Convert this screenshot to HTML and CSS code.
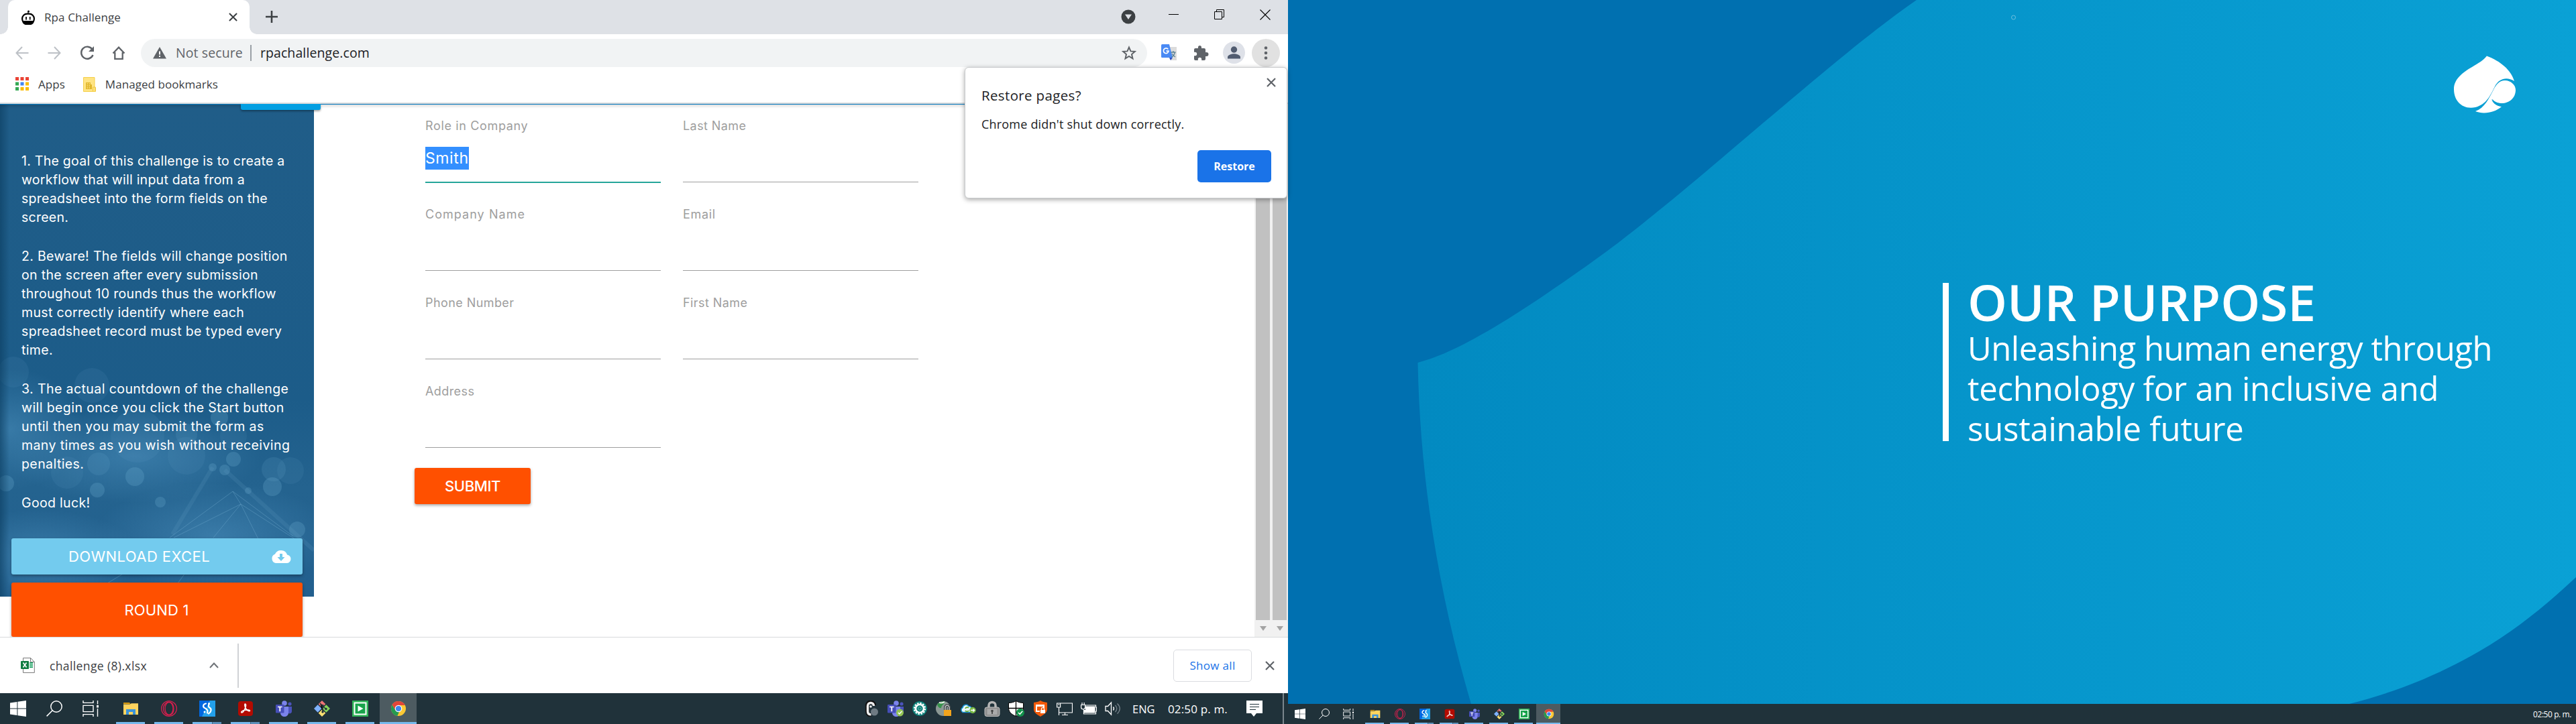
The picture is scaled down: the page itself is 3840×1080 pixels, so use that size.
FILE: index.html
```html
<!DOCTYPE html>
<html lang="en">
<head>
<meta charset="utf-8">
<title>Rpa Challenge</title>
<link rel="stylesheet" href="styles.css">
</head>
<body>
<svg class="sprite" aria-hidden="true">
  <symbol id="i-win" viewBox="0 0 24 24"><path fill="#fff" d="M0 3.4 10.4 2v9.5H0zM11.4 1.8 24 0v11.5H11.4zM0 12.5h10.4V22L0 20.6zM11.4 12.5H24V24l-12.6-1.8z"/></symbol>
  <symbol id="i-search" viewBox="0 0 24 24"><g fill="none" stroke="#fff" stroke-width="1.5"><circle cx="15" cy="9" r="8.2"/><path d="M9.2 14.8.6 23.4"/></g></symbol>
  <symbol id="i-tasks" viewBox="0 0 24 24"><g fill="none" stroke="#fff" stroke-width="1.4"><path d="M1 0v3.4h15V0M1 24v-3.4h15V24M1 7.4h15v9.2H1zM22.5 0v5.5M22.5 12v12"/></g><path fill="#fff" d="M21 7h3v3.500h-3z"/></symbol>
  <symbol id="i-folder" viewBox="0 0 24 24"><path fill="#d99a0b" d="M1 3h9l1.500 2H1z"/><path fill="#ffd45e" d="M1 5.500h9.500L13 4.200h10V21H1z"/><path fill="#3c94da" d="M5 21v-8h14v8h-4v-4H9v4z"/></symbol>
  <symbol id="i-opera" viewBox="0 0 24 24"><g fill="none" stroke="#d81f4e" stroke-width="1.3"><circle cx="12" cy="12" r="11.300"/><ellipse cx="12" cy="12" rx="6" ry="9.500"/><path d="M13 2.400c4.500 1 6 5 6 9.600s-1.500 8.600-6 9.600M13 2.400C9 1.500 3.500 5.500 3.500 12S9 22.500 13 21.600"/></g></symbol>
  <symbol id="i-azure" viewBox="0 0 24 24"><path fill="#0067df" d="M0 0h24v24H0z"/><path fill="#23a0ea" d="M16 0h8v24H4z"/><g fill="none" stroke="#fff" stroke-width="2.200" stroke-linecap="round"><path d="M10 4.500C5.500 5 5 9.500 8 11c3.500 1.500 5.500 3.500 4 7.500M14.500 5.500c-1.500 2.500-.5 4.500 1.500 5.500 2.500 1.500 2 6.500-2 8.500"/></g><circle cx="14.500" cy="4.500" r="1.500" fill="#fff"/><circle cx="8" cy="17" r="1.500" fill="#fff"/></symbol>
  <symbol id="i-acrobat" viewBox="0 0 24 24"><rect x="1" y="1" width="22" height="22" rx="4" fill="#b30b00"/><path fill="none" stroke="#fff" stroke-width="1.500" d="M11.500 5c1.500 0 1.300 3 .3 5.500C10.500 14 8 18.500 6.200 18c-1.600-.8 1-3 5-3.700 3.500-.7 7.500-.5 7.300 1-.3 1.500-4-.3-6-3.300C11 9.800 10 5 11.500 5z"/></symbol>
  <symbol id="i-teams" viewBox="0 0 24 24"><circle cx="21" cy="5" r="2.600" fill="#4b53bc"/><circle cx="13" cy="4" r="3.800" fill="#7b83eb"/><path fill="#4b53bc" d="M16 9h8v7c0 3-3 4-5 3z"/><path fill="#7b83eb" d="M7 9h12v9c0 8-12 8-12 0z"/><rect y="6" width="12.500" height="12.500" rx="1.200" fill="#464eb8"/><path fill="#fff" d="M3 8.700h6.600v1.600H7.200v6H5.400v-6H3z"/></symbol>
  <symbol id="i-git" viewBox="0 0 24 24"><path fill="#f07575" d="m12 0 5.300 5.300-5.300 5.300-5.300-5.300z"/><path fill="#80b3ff" d="m5.700 6.300 5.600 5.700-5.600 5.700L0 12z"/><path fill="#87d45a" d="m18.300 6.300L24 12l-5.700 5.700-5.600-5.700z"/><path fill="#ffe173" d="m12 13.400 5.300 5.300L12 24l-5.300-5.300z"/><g stroke="#25343a" stroke-width="1.500"><path d="m9 4 4 4v9M13 8.500l5 4"/></g><g fill="#25343a"><circle cx="13" cy="7.500" r="1.700"/><circle cx="18" cy="12.500" r="1.700"/><circle cx="13" cy="17" r="1.700"/></g></symbol>
  <symbol id="i-play" viewBox="0 0 24 24"><path fill="#2fb457" d="M0 0h24v24H0z"/><path fill="#17a34a" stroke="#fff" stroke-width="2" d="M3.500 3.500h17v17h-17z"/><path fill="#fff" d="m8.500 7.500 8 4.500-8 4.500z"/></symbol>
  <symbol id="i-chrome" viewBox="0 0 24 24"><circle cx="12" cy="12" r="11" fill="#fbc834"/><path fill="#e1453a" d="M2.500 6.500A11 11 0 0 1 21.800 7H12L7.500 14.500z"/><path fill="#259a50" d="M2.500 6.500 7.700 14.700 13 17l-2.700 6A11 11 0 0 1 2.500 6.500z"/><circle cx="12" cy="12" r="5.300" fill="#fff"/><circle cx="12" cy="12" r="4.100" fill="#3f85ee"/></symbol>
  <symbol id="i-x" viewBox="0 0 14 14"><path d="m1 1 12 12M13 1 1 13" stroke="currentColor" stroke-width="2.200" fill="none"/></symbol>
</svg>

<div class="desktop">
  <div class="monitor">
    <header class="tabstrip">
      <div class="tab">
        <svg width="20" height="22" viewBox="0 0 20 22"><circle cx="10.500" cy="2" r="1.500"/><path d="M10 2.500V6" stroke="#000" stroke-width="1.200"/><rect x="1.100" y="5.600" width="17.800" height="14.800" rx="7.200" fill="#fff" stroke="#000" stroke-width="2.200"/><path d="M1 16h18c-.5 3.500-2.500 6-6 6H7c-3.500 0-5.500-2.500-6-6z"/><path d="M7 10v4.500M12.700 10v4.500" stroke="#000" stroke-width="1.800"/></svg>
        <span class="tab-title">Rpa Challenge</span>
        <svg class="tab-close" width="13" height="13"><use href="#i-x"/></svg>
      </div>
      <svg class="new-tab" width="18" height="18" viewBox="0 0 18 18"><path d="M9 0v18M0 9h18" stroke="#3c4043" stroke-width="2.600"/></svg>
      <div class="window-controls">
        <svg width="22" height="22" viewBox="0 0 22 22"><circle cx="11" cy="11" r="10.500" fill="#3c4043"/><path d="M6 7.500h10L11 15z" fill="#dee1e6"/></svg>
        <svg class="win-btn" width="16" height="16" viewBox="0 0 16 16"><path d="M0 7.500h15" stroke="#000"/></svg>
        <svg class="win-btn" width="16" height="16" viewBox="0 0 16 16"><path d="M.5 3.500h11v11H.5zM3.500 3V.5h11v11H12" fill="none" stroke="#000"/></svg>
        <svg class="win-btn" width="16" height="16" viewBox="0 0 16 16"><path d="m.5.5 15 15M15.500.5l-15 15" stroke="#000" stroke-width="1.100"/></svg>
      </div>
    </header>

    <div class="toolbar">
      <svg class="nav-ico" width="20" height="20" viewBox="0 0 20 20"><path d="M19.500 10H2M10 1 1.500 10l8.500 9" fill="none" stroke="#bdc1c6" stroke-width="2"/></svg>
      <svg class="nav-ico" width="20" height="20" viewBox="0 0 20 20"><path d="M.5 10H18M10 1l8.500 9-8.500 9" fill="none" stroke="#bdc1c6" stroke-width="2"/></svg>
      <svg class="nav-ico" width="22" height="22" viewBox="0 0 22 22"><path d="M18.500 5.500a9 9 0 1 0 1 8.500" fill="none" stroke="#5f6368" stroke-width="2.400"/><path d="M21 1v8h-8z" fill="#5f6368"/></svg>
      <svg class="nav-ico" width="20" height="20" viewBox="0 0 20 20"><path d="M1.500 10.500 10 1.600l8.500 8.900M4.300 9v9.800h11.400V9" fill="none" stroke="#5f6368" stroke-width="2.300"/></svg>
      <div class="omnibox">
        <svg width="20" height="18" viewBox="0 0 20 18"><path d="M10 0l10 17.500H0z" fill="#5f6368"/><path d="M10 6.500v5M10 13v2" stroke="#fff" stroke-width="2"/></svg>
        <span class="not-secure">Not secure</span>
        <span class="url">rpachallenge.com</span>
        <svg class="star" width="22" height="22" viewBox="0 0 22 22"><path d="m11 2.600 2.500 5.800 6.300.5-4.800 4.200 1.500 6.200L11 16l-5.500 3.300L7 13.100 2.200 8.900l6.300-.5z" fill="none" stroke="#5f6368" stroke-width="2"/></svg>
      </div>
      <div class="extensions">
        <svg width="24" height="25" viewBox="0 0 24 25"><path d="M10 4h13v20H14z" fill="#dcdcdc"/><path d="M1.500 0H12l5 20H1.500Q0 20 0 18.500v-17Q0 0 1.500 0z" fill="#4a8af4"/><path d="M12 20h5l-3 4z" fill="#2f4fc0"/><path d="M10.300 7.500A3.800 3.800 0 1 0 11 10.200H7.500" fill="none" stroke="#fff" stroke-width="1.700"/><path d="M14.500 12h7M18 10v2M20.500 12c-1 4-3 6-5 7M16 14c1 2 3 4 5 5" fill="none" stroke="#5b8295" stroke-width="1.300"/></svg>
        <svg width="22" height="22" viewBox="0 0 22 22"><path fill="#5f6368" d="M18.500 10H17V6a2 2 0 0 0-2-2h-4V2.600a2.500 2.500 0 0 0-5 0V4H2a2 2 0 0 0-2 2v3.800h1.500a2.700 2.700 0 0 1 0 5.400H0V20a2 2 0 0 0 2 2h3.800v-1.500a2.700 2.700 0 0 1 5.400 0V22H15a2 2 0 0 0 2-2v-4h1.500a3 3 0 0 0 0-6z" /></svg>
        <svg width="33" height="33" viewBox="0 0 33 33"><circle cx="16.500" cy="16.500" r="16.500" fill="#dee1e8"/><circle cx="16.500" cy="12" r="4.700" fill="#515c70"/><path d="M7 25.500v-2.300c0-3.500 6-5 9.500-5s9.500 1.500 9.500 5v2.300z" fill="#515c70"/></svg>
        <svg width="42" height="42" viewBox="0 0 42 42"><circle cx="21" cy="21" r="21" fill="#e1e1e1"/><g fill="#5f6368"><circle cx="21" cy="13.500" r="2.300"/><circle cx="21" cy="21" r="2.300"/><circle cx="21" cy="28.500" r="2.300"/></g></svg>
      </div>
    </div>

    <div class="bookmarks">
      <svg width="20" height="20" viewBox="0 0 20 20"><path fill="#ea4335" d="M0 0h5v5H0zM7.500 0h5v5h-5zM15 0h5v5h-5z"/><path fill="#34a853" d="M0 7.500h5v5H0zM0 15h5v5H0z"/><path fill="#4285f4" d="M7.500 7.500h5v5h-5z"/><path fill="#fbbc04" d="M15 7.500h5v5h-5zM7.500 15h5v5h-5zM15 15h5v5h-5z"/></svg>
      <span>Apps</span>
      <svg class="folder-ico" width="19" height="22" viewBox="0 0 19 22"><path d="M.5.500h16.500v14l1.500 1v6H.5z" fill="#ffe484" stroke="#f5cf48"/><path d="M4 8h7v3h2v7H4z" fill="#e0b62c"/><path d="M5.500 10h1.500M8.500 10H10M5.500 13h1.500M8.500 13H10M5.500 16h1.500M8.500 16H10" stroke="#ffe484" stroke-width="1.500"/><path d="M14.500 21v-6h3.500v6" fill="none" stroke="#f0c63c"/></svg>
      <span>Managed bookmarks</span>
    </div>

    <main class="viewport">
      <div class="page-nav"><i class="page-nav-tab"></i></div>
      <aside class="sidebar">
        <svg class="bokeh" width="468" height="735" viewBox="0 155 468 735">
          <defs>
            <linearGradient id="side" x1="0" y1="0" x2="0" y2="1"><stop offset="0" stop-color="#205d88"/><stop offset=".6" stop-color="#1c5c89"/><stop offset=".78" stop-color="#24638f"/><stop offset="1" stop-color="#225f8e"/></linearGradient>
            <radialGradient id="glow"><stop offset="0" stop-color="#4c90bd" stop-opacity=".55"/><stop offset="1" stop-color="#4c90bd" stop-opacity="0"/></radialGradient>
            <linearGradient id="edge"><stop offset="0" stop-color="#0b3d60" stop-opacity=".6"/><stop offset="1" stop-color="#0b3d60" stop-opacity="0"/></linearGradient>
          </defs>
          <path fill="url(#side)" d="M0 155h468v735H0z"/>
          <g fill="url(#glow)"><ellipse cx="15" cy="640" rx="110" ry="90"/><ellipse cx="200" cy="680" rx="190" ry="70"/><ellipse cx="320" cy="800" rx="180" ry="80"/><ellipse cx="60" cy="830" rx="150" ry="70"/></g>
          <g fill="#68a8cc" fill-opacity=".1"><circle cx="20" cy="555" r="23"/><circle cx="137" cy="575" r="26"/><circle cx="205" cy="650" r="40"/><circle cx="100" cy="705" r="24"/><circle cx="433" cy="702" r="20"/><circle cx="348" cy="650" r="20"/><circle cx="278" cy="680" r="28"/></g>
          <g fill="#68a8cc" fill-opacity=".28"><circle cx="9" cy="721" r="12"/><circle cx="145" cy="731" r="11"/><circle cx="201" cy="711" r="14"/><circle cx="239" cy="749" r="8"/><circle cx="317" cy="697" r="6"/><circle cx="335" cy="701" r="8"/><circle cx="348" cy="685" r="11"/><circle cx="406" cy="726" r="14"/><circle cx="443" cy="790" r="12"/><circle cx="370" cy="732" r="5"/><circle cx="327" cy="623" r="13"/></g>
          <g fill="#68a8cc" fill-opacity=".16"><circle cx="147" cy="692" r="17"/><circle cx="408" cy="700" r="18"/><circle cx="278" cy="648" r="16"/></g>
          <g fill="none" stroke="#74add0" stroke-opacity=".4"><path d="m253 802 94-69 90 67M259 802l100-50 90 58M318 802l41-50 30 60M347 733l12 19M265 870l11-15M160 870l25-15"/><path d="m335 701 133 120M317 697l-60 100" stroke-width="6" stroke-opacity=".14"/></g>
          <path fill="url(#edge)" d="M0 155h14v735H0z"/>
        </svg>
        <div class="instructions">
          <p class="goal">1. The goal of this challenge is to create a<br>workflow that will input data from a<br>spreadsheet into the form fields on the<br>screen.</p>
          <p>2. Beware! The fields will change position<br>on the screen after every submission<br>throughout 10 rounds thus the workflow<br>must correctly identify where each<br>spreadsheet record must be typed every<br>time.</p>
          <p class="countdown">3. The actual countdown of the challenge<br>will begin once you click the Start button<br>until then you may submit the form as<br>many times as you wish without receiving<br>penalties.</p>
          <p>Good luck!</p>
        </div>
        <div class="btn btn-download"><span>DOWNLOAD EXCEL</span>
          <svg width="30" height="20" viewBox="0 0 30 20"><path fill="#fff" d="M24 7.500A9.500 9 0 0 0 6 6.600 7 7 0 0 0 7 20h17a6.300 6.300 0 0 0 0-12.500z"/><path fill="#73cbee" d="M13 6h4v5h3.500L15 17l-5.500-6H13z"/></svg>
        </div>
        <div class="btn btn-round">ROUND 1</div>
      </aside>

      <form class="form">
        <div class="fields">
          <div class="field active"><label class="wide">Role in Company</label><div class="input"><span class="selected">Smith</span></div></div>
          <div class="field"><label>Last Name</label><div class="input"></div></div>
          <div class="field"><label class="wider">Company Name</label><div class="input"></div></div>
          <div class="field"><label class="wide">Email</label><div class="input"></div></div>
          <div class="field"><label>Phone Number</label><div class="input"></div></div>
          <div class="field"><label>First Name</label><div class="input"></div></div>
          <div class="field"><label>Address</label><div class="input"></div></div>
        </div>
        <div class="btn btn-submit">SUBMIT</div>
      </form>

      <div class="scrollbars">
        <div class="scrollbar"><i></i></div>
        <div class="scrollbar"><i></i></div>
      </div>
    </main>

    <div class="downloads">
      <div class="download-item">
        <svg width="21" height="23" viewBox="0 0 21 23"><path d="M3.500.600h11.300l5.500 6v15.800H3.500z" fill="#fff" stroke="#777"/><path d="M14.500.600v6h6" fill="none" stroke="#777"/><path d="M13 8h5M13 11h5M13 14h5" stroke="#21a366" stroke-width="2"/><rect y="5" width="12" height="12" rx="1" fill="#107c41"/><path d="m3.500 7.500 5 7M8.500 7.500l-5 7" stroke="#fff" stroke-width="1.700"/></svg>
        <span>challenge (8).xlsx</span>
        <svg class="chev" width="14" height="9" viewBox="0 0 14 9"><path d="m1 8 6-6.500L13 8" fill="none" stroke="#6e7277" stroke-width="2"/></svg>
      </div>
      <div class="show-all">Show all</div>
      <svg class="downloads-close" width="14" height="14"><use href="#i-x"/></svg>
    </div>

    <footer class="taskbar">
      <div class="sys"><svg><use href="#i-win"/></svg></div><div class="sys"><svg><use href="#i-search"/></svg></div><div class="sys"><svg><use href="#i-tasks"/></svg></div>
      <div class="apps">
        <div class="app"><svg><use href="#i-folder"/></svg></div>
        <div class="app"><svg><use href="#i-opera"/></svg></div>
        <div class="app multi"><svg><use href="#i-azure"/></svg></div>
        <div class="app multi"><svg><use href="#i-acrobat"/></svg></div>
        <div class="app"><svg><use href="#i-teams"/></svg></div>
        <div class="app"><svg><use href="#i-git"/></svg></div>
        <div class="app"><svg><use href="#i-play"/></svg></div>
        <div class="app current"><svg><use href="#i-chrome"/></svg></div>
      </div>
      <div class="tray">
        <svg viewBox="0 0 24 24"><path d="M16 7c0-6-10-6-10 0v9c0 4 3 6 6 6" fill="none" stroke="#111" stroke-width="6"/><path d="M15.500 8c0-6-9-6-9 0v8c0 4 2 5 5 5" fill="none" stroke="#eee" stroke-width="3.500"/><circle cx="11" cy="9" r="1.700" fill="#eee"/><circle cx="16.500" cy="17" r="5.500" fill="#6f7b83"/></svg>
        <svg viewBox="0 0 24 24"><use href="#i-teams" width="24" height="24"/><circle cx="18.500" cy="18" r="5.500" fill="#92c353"/><path d="m15.800 18 2 2 3.500-4" fill="none" stroke="#fff" stroke-width="1.500"/></svg>
        <svg viewBox="0 0 24 24"><circle cx="12" cy="12" r="11" fill="#0b7f78"/><circle cx="12" cy="12" r="8.200" fill="none" stroke="#fff" stroke-width="2" stroke-dasharray="2.600 1.690"/><circle cx="12" cy="12" r="6" fill="none" stroke="#fff" stroke-width="2.600"/><circle cx="12" cy="12" r="2.300" fill="none" stroke="#8ccac5" stroke-width=".8"/></svg>
        <svg viewBox="0 0 24 24"><circle cx="11" cy="12" r="11" fill="#8b9894"/><path d="M2 6c4-5 9-6 12-4-2 4-5 4-6 9-3 1-5-2-6-5z" fill="#35924a"/><path d="M5 3c3 1 6 0 8-1" stroke="#e8eee8" stroke-width="2"/><path d="M14 15v-4c0-5 6-5 6 0v4" fill="none" stroke="#252b30" stroke-width="3.500"/><path d="M14 15v-4c0-5 6-5 6 0v4" fill="none" stroke="#ccc" stroke-width="1.500"/><path d="M12 14h11v9H12z" fill="#f3a51d"/></svg>
        <svg viewBox="0 0 24 24"><path d="M4 17.500a4 4 0 0 1 0-7 5 5 0 0 1 9-2c3 0 4 2 4 4v5z" fill="#e8f8ff" stroke="#1692d0" stroke-width="1.500"/><path d="M8 12a3 3 0 0 1 5-1M13 15a3 3 0 0 1-5 0" fill="none" stroke="#69ae31" stroke-width="1.800"/><circle cx="19" cy="14.500" r="4.700" fill="#78b943"/><path d="M16 14.500h5.500m-2-2 2 2-2 2" fill="none" stroke="#fff" stroke-width="1.500"/></svg>
        <svg viewBox="0 0 24 24"><path d="M7 11V7c0-6 10-6 10 0v4" fill="none" stroke="#b5b5b5" stroke-width="3.500"/><rect x="1" y="10" width="22" height="13.500" rx="3" fill="#8e8e8e" stroke="#c0c0c0"/><rect x="4.500" y="12.500" width="15" height="8.500" fill="#aaa"/><circle cx="12" cy="15.500" r="1.800" fill="#444"/><path d="M12 16v4" stroke="#444" stroke-width="1.800"/></svg>
        <svg viewBox="0 0 24 24"><path d="M11.500.500c3 2 7 3 11 3V11c0 6-5 10-11 12.500C5 21 .5 17 .5 11V3.500c4 0 8-1 11-3z" fill="#fff" stroke="#000"/><path d="M11.500.500v23M.500 11.500h22" stroke="#000" stroke-width="1.300"/><circle cx="18" cy="18" r="6" fill="#11924a"/><path d="m15 18 2.300 2.300 4-4.600" fill="none" stroke="#fff" stroke-width="1.500"/></svg>
        <svg viewBox="0 0 24 24"><path d="M12 0c3 2 6 2.500 10 3v10c0 5-5 8-10 11C7 21 2 18 2 13V3c4-.5 7-1 10-3z" fill="#f25a09"/><path d="M11 16H6V7h11v4" fill="none" stroke="#fff" stroke-width="2"/><path d="M5 6h13v3H5zM12 14h7v5h-7z" fill="#fff"/><path d="M13.500 14v-1.500c0-2.500 4-2.500 4 0V14" fill="none" stroke="#fff" stroke-width="1.200"/></svg>
        <svg viewBox="0 0 24 24"><g fill="none" stroke="#fff" stroke-width="1.200"><path d="M6 4h17.500v14H4M8 21.500h9M12.500 18v3.500M.600 4h5v6h-5zM2 6h2.500M3.500 10v12"/></g></svg>
        <svg viewBox="0 0 24 24"><path d="M7 8.500h14.500v10H5V14h2z" fill="#fff"/><g fill="none" stroke="#fff" stroke-width="1.200"><path d="M6 7h16.500v3h1v6h-1v4H4.500V13M.600 6.500h6V10c0 4-6 4-6 0zM2 6.500V3M5.200 6.500V3"/></g></svg>
        <svg viewBox="0 0 24 24"><g fill="none" stroke="#fff" stroke-width="1.300"><path d="M1 8.500h3.500L9.500 3v18l-5-5.500H1zM12.500 9.500c1.300 1.700 1.300 3.500 0 5.200"/><path d="M15.500 7c3 3.300 3 6.800 0 10.200M18.500 4.500c5 5 5 10.200 0 15.200" stroke="#75818a"/></g></svg>
      </div>
      <span class="lang">ENG</span>
      <span class="clock">02:50 p. m.</span>
      <svg class="notif" width="24" height="24" viewBox="0 0 24 24"><path fill="#fff" d="M0 0h24v19h-9l-4 5-4-5H0z"/><path d="M5 5.500h14M5 9.500h14M5 13.500h9" stroke="#20323a" stroke-width="1.200"/></svg>
      <i class="peek"></i>
    </footer>

    <div class="popup">
      <svg class="popup-close" width="14" height="14"><use href="#i-x"/></svg>
      <h2>Restore pages?</h2>
      <p>Chrome didn't shut down correctly.</p>
      <div class="restore">Restore</div>
    </div>
  </div>

  <div class="monitor second">
    <div class="wallpaper">
      <svg class="wall" width="1920" height="1050" viewBox="0 0 1920 1050">
        <defs><linearGradient id="sea" gradientUnits="userSpaceOnUse" x1="190" y1="0" x2="1920" y2="0"><stop offset="0" stop-color="#028ac1"/><stop offset="1" stop-color="#0aa1d5"/></linearGradient></defs>
        <path fill="url(#sea)" d="M937 0C862 52 782 122 722 172S620 259.500 575 296 498 359 453 391 349 464 306 489 230 531 193.500 541C197 720 226 890 273 1050H1582C1660 1030 1717 1005 1775 972 1830 940 1875 903 1920 861V0z"/>
        <ellipse cx="1081.500" cy="26" rx="3" ry="3" fill="none" stroke="#6fc0df"/>
      </svg>
      <svg class="spade" width="94" height="88" viewBox="0 0 94 88"><path fill="#fff" d="M50 .500C70 8 86 21 91 38 80 31 68 34 62 46 55 60 49 73 33 77 14 81 1 68 1 50 1 35 14 25 28 17 38 11 45 7 50 .500zM93 51c0 12-9 20-21 20-6 0-11-2-15-6l2 4c3 4 8 6 13 7-10 9-27 12-39 7 14-5 20-19 27-32 4-8 9-14 17-14 9 0 16 7 16 14z"/><path d="M58 64.500c4 5 9 7.300 18 6.700l-1 5c-8 0-15-3-17-11.700z" fill="#0a9fd3"/></svg>
      <section class="purpose">
        <h1>OUR PURPOSE</h1>
        <p><span class="l1">Unleashing human energy through</span><br><span class="l2">technology for an inclusive and</span><br><span class="l2">sustainable future</span></p>
      </section>
    </div>
    <footer class="taskbar small">
      <div class="sys"><svg><use href="#i-win"/></svg></div><div class="sys"><svg><use href="#i-search"/></svg></div><div class="sys"><svg><use href="#i-tasks"/></svg></div>
      <div class="apps">
        <div class="app"><svg><use href="#i-folder"/></svg></div>
        <div class="app"><svg><use href="#i-opera"/></svg></div>
        <div class="app multi"><svg><use href="#i-azure"/></svg></div>
        <div class="app multi"><svg><use href="#i-acrobat"/></svg></div>
        <div class="app"><svg><use href="#i-teams"/></svg></div>
        <div class="app"><svg><use href="#i-git"/></svg></div>
        <div class="app"><svg><use href="#i-play"/></svg></div>
        <div class="app current"><svg><use href="#i-chrome"/></svg></div>
      </div>
      <span class="clock">02:50 p. m.</span>
    </footer>
  </div>
</div>
</body>
</html>
```
FILE: styles.css
```css
* { box-sizing: border-box; margin: 0; padding: 0; }
body { width: 3840px; height: 1080px; overflow: hidden; background: #fff; font-family: "Open Sans", sans-serif; color: #3c4043; }
svg { display: block; flex: none; }
.sprite { position: absolute; width: 0; height: 0; }
.desktop { display: flex; height: 1080px; }
.monitor { position: relative; width: 1920px; height: 1080px; display: flex; flex-direction: column; background: #fff; }

/* Browser chrome */
.tabstrip { flex: none; height: 51px; background: #dee1e6; display: flex; padding-left: 12px; }
.tab { position: relative; width: 360px; height: 51px; background: #fff; border-radius: 10px 10px 0 0; display: flex; align-items: center; padding: 0 18px 0 20px; }
.tab::before, .tab::after { content: ""; position: absolute; bottom: 0; width: 11px; height: 11px; }
.tab::before { left: -11px; background: radial-gradient(circle at 0 0, #dee1e6 10.500px, #fff 11px); }
.tab::after { right: -11px; background: radial-gradient(circle at 100% 0, #dee1e6 10.500px, #fff 11px); }
.tab-title { margin-left: 14px; font-size: 17px; letter-spacing: .1px; }
.tab-close { margin-left: auto; color: #3c4043; }
.new-tab { margin: 16px 0 0 24px; }
.window-controls { margin-left: auto; display: flex; align-items: flex-start; padding: 14px 26px 0 0; }
.window-controls .win-btn { margin-left: 52px; }
.window-controls .win-btn:nth-child(2) { margin-left: 49px; }
.toolbar { flex: none; height: 55px; display: flex; align-items: center; padding-left: 23px; }
.nav-ico { margin-right: 28px; }
.nav-ico:nth-child(3) { margin-right: 26px; }
.nav-ico:nth-child(4) { margin-right: 23px; }
.omnibox { width: 1500px; height: 42px; border-radius: 21px; background: #f1f3f4; display: flex; align-items: center; padding: 0 16px 0 18px; }
.not-secure { margin-left: 14px; font-size: 19.500px; letter-spacing: .1px; color: #5f6368; }
.url { margin-left: 11px; padding-left: 13px; line-height: 24px; border-left: 2px solid #9aa0a6; font-size: 19.500px; letter-spacing: .1px; color: #202124; }
.star { margin-left: auto; }
.extensions { display: flex; align-items: center; padding-left: 21px; }
.extensions svg:nth-child(2) { margin-left: 25px; }
.extensions svg:nth-child(3) { margin-left: 21px; }
.extensions svg:nth-child(4) { margin-left: 10px; }
.bookmarks { flex: none; height: 49px; border-bottom: 2px solid #d8dadc; display: flex; align-items: flex-start; padding: 9px 0 0 23px; font-size: 17px; letter-spacing: .05px; line-height: 21px; }
.bookmarks span { margin-left: 14px; }
.bookmarks .folder-ico { margin-left: 27px; }

/* Challenge page */
.viewport { position: relative; flex: none; height: 795px; display: flex; overflow: hidden; font-family: Inter, sans-serif; }
.page-nav { position: absolute; z-index: 2; top: 0; left: 0; right: 50px; height: 1px; background: #0277bd; box-shadow: 0 1px 4px rgba(0,0,0,.6); }
.page-nav-tab { position: absolute; left: 359px; top: 0; width: 119px; height: 9px; background: #039fe2; border-radius: 0 0 3px 3px; box-shadow: 0 2px 3px rgba(0,0,0,.35); }
.sidebar { position: relative; width: 468px; padding: 71px 17px 0; color: #fff; }
.bokeh { position: absolute; left: 0; top: 0; }
.instructions { position: relative; height: 577px; padding-left: 15px; font-size: 19.500px; letter-spacing: .34px; line-height: 28px; white-space: nowrap; }
.instructions p { margin-bottom: 30px; }
.goal { letter-spacing: .26px; }
.countdown { letter-spacing: .42px; }
.btn { position: relative; display: flex; align-items: center; justify-content: center; border-radius: 3px; font-size: 22px; color: #fff; box-shadow: 0 2px 4px rgba(0,0,0,.35); }
.btn-download { height: 54px; margin-bottom: 12px; padding: 0 17px 0 85px; background: #73cbee; justify-content: space-between; letter-spacing: .41px; }
.btn-round { height: 81px; padding-right: 1px; background: #ff5000; letter-spacing: .15px; }
.form { width: 1402px; padding: 20px 0 0 166px; }
.fields { display: grid; grid-template-columns: 351px 351px; gap: 35px 33px; }
.field { height: 97px; }
.field label { display: block; height: 24px; line-height: 26px; font-size: 18px; letter-spacing: .42px; color: #9e9e9e; }
.field label.wide { letter-spacing: .65px; }
.field label.wider { letter-spacing: 1.040px; }
.input { height: 73px; padding-top: 20px; border-bottom: 1px solid #9e9e9e; }
.active .input { height: 74px; border-bottom: 2px solid #26a69a; }
.selected { display: inline-block; width: 65px; height: 34px; line-height: 34px; background: #338fff; color: #fff; font-size: 23px; letter-spacing: .6px; }
.btn-submit { width: 173px; height: 54px; margin: 30px 0 0 -16px; background: #ff5000; font-weight: 500; letter-spacing: -.4px; }
.scrollbars { width: 50px; background: #f1f1f1; display: flex; gap: 4px; padding-left: 2px; }
.scrollbar { width: 21px; height: 770px; background: #c1c1c1; }
.scrollbar i { display: block; width: 0; margin: 779px auto 0; border: 5.500px solid transparent; border-top: 7px solid #a3a3a3; border-bottom: 0; }

/* Downloads shelf */
.downloads { flex: none; height: 84px; border-top: 1px solid #d8dadc; display: flex; align-items: center; padding: 0 20px 0 0; }
.download-item { width: 356px; height: 66px; border-right: 2px solid #d0d2d5; display: flex; align-items: center; padding: 0 28px 0 31px; }
.download-item span { margin-left: 22px; font-size: 17.500px; letter-spacing: .38px; }
.chev { margin-left: auto; }
.show-all { margin-left: auto; width: 117px; height: 48px; border: 1px solid #dadce0; border-radius: 5px; display: flex; align-items: center; justify-content: center; font-size: 17px; font-weight: 500; letter-spacing: .3px; color: #1a73e8; }
.downloads-close { margin-left: 20px; color: #5f6368; }

/* Session restore bubble */
.popup { position: absolute; z-index: 5; left: 1438px; top: 100px; width: 481px; height: 196px; background: #fff; border: 1px solid #c8cacc; border-radius: 6px; box-shadow: 0 2px 7px rgba(0,0,0,.35); padding: 25px 23px 0 24px; color: #202124; }
.popup h2 { font-size: 20.500px; font-weight: 400; line-height: 32px; letter-spacing: .35px; }
.popup p { margin-top: 13px; font-size: 18px; line-height: 28px; letter-spacing: .2px; }
.popup-close { position: absolute; right: 16px; top: 15px; color: #5f6368; }
.restore { width: 110px; height: 48px; margin: 25px 0 0 auto; background: #1a73e8; border-radius: 5px; color: #fff; font-size: 16px; font-weight: 700; display: flex; align-items: center; justify-content: center; }

/* Taskbars */
.taskbar { flex: none; height: 46px; background: #20323a; display: flex; align-items: center; color: #fff; }
.sys { width: 54px; }
.sys svg, .app svg { width: 24px; height: 24px; margin: 0 auto; }
.apps { display: flex; height: 100%; margin-left: 4px; }
.app { position: relative; width: 57px; display: flex; align-items: center; }
.app::after { content: ""; position: absolute; bottom: 0; left: 7px; right: 7px; height: 3px; background: #76b9ed; }
.app.multi::after { background: linear-gradient(90deg, #76b9ed 67%, #46687f 67%, #46687f 70%, #5b8fb9 70%); }
.app.current { background: linear-gradient(90deg, transparent 1px, #4d5b61 1px, #4d5b61 56px, transparent 56px); }
.app.current::after { left: 1px; right: 1px; }
.tray { display: flex; gap: 12px; margin-left: auto; margin-right: 17px; }
.tray svg { width: 24px; height: 24px; }
.lang { font-size: 16.500px; width: 36px; }
.clock { margin-left: 17px; font-size: 17px; letter-spacing: .15px; width: 90px; white-space: nowrap; }
.notif { margin-left: 27px; }
.peek { width: 2px; height: 46px; margin: 0 6px 0 30px; background: #7a868c; }
.taskbar.small { height: 30px; }
.small .sys { width: 36px; }
.small .sys svg, .small .app svg { width: 16px; height: 16px; }
.small .apps { margin-left: 3px; }
.small .app { width: 37px; }
.small .app::after { left: 4px; right: 5px; height: 2px; }
.small .app.current { background: linear-gradient(90deg, #4d5b61 36px, transparent 36px); }
.small .app.current::after { left: 0; right: 1px; }
.small .clock { margin-left: auto; margin-right: 6px; width: 58px; font-size: 12px; letter-spacing: -.42px; }

/* Wallpaper */
.wallpaper { position: relative; flex: none; height: 1050px; background: #0070b0; }
.wall { position: absolute; left: 0; top: 0; }
.spade { position: absolute; left: 1737px; top: 83px; }
.purpose { position: absolute; left: 976px; top: 422px; height: 236px; border-left: 9px solid #fff; padding-left: 28px; color: #fff; white-space: nowrap; }
.purpose h1 { font-size: 75px; font-weight: 600; line-height: 56px; letter-spacing: -.1px; }
.purpose p { margin-top: 11px; font-size: 49px; line-height: 60px; }
.l1 { letter-spacing: -.46px; }
.l2 { letter-spacing: -.2px; }
```
